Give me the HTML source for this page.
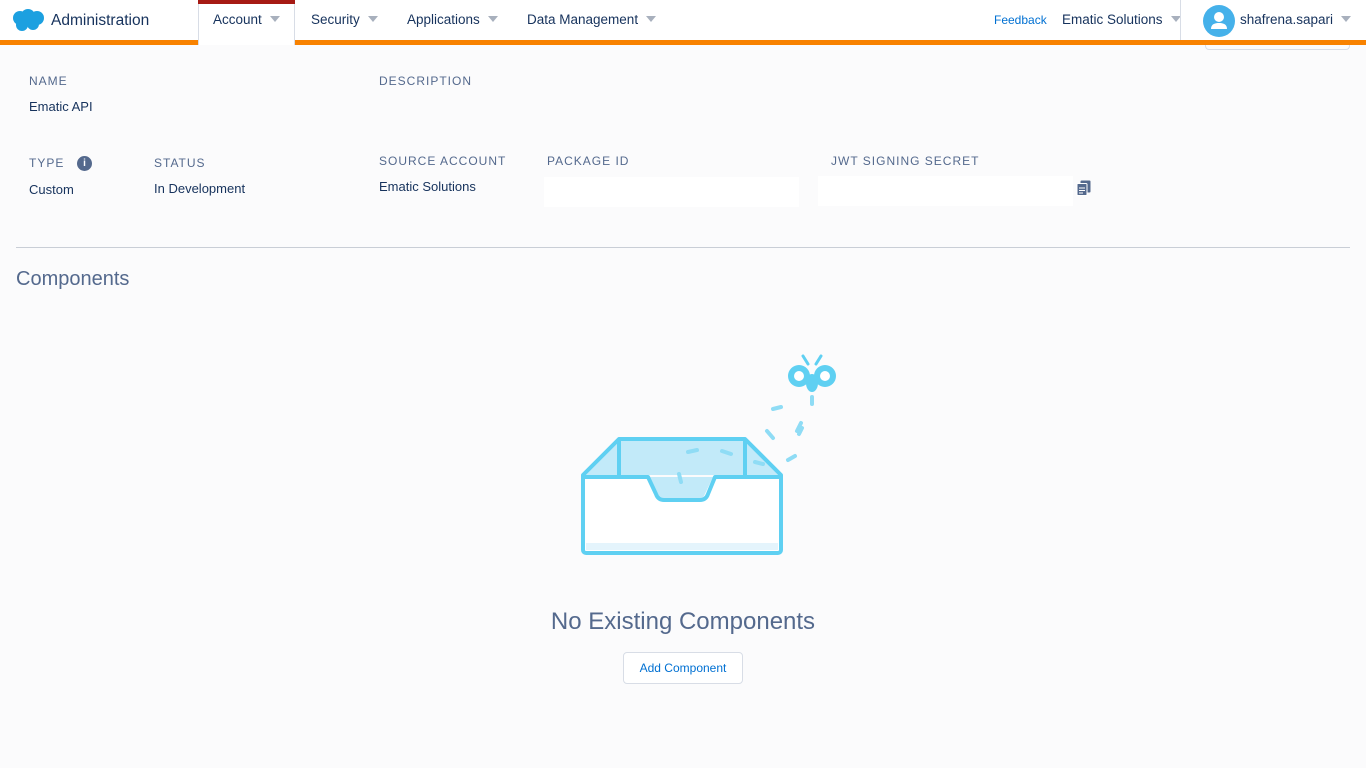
<!DOCTYPE html>
<html><head><meta charset="utf-8"><style>
*{margin:0;padding:0;box-sizing:border-box}
body{width:1366px;height:768px;background:#fbfbfc;font-family:"Liberation Sans",sans-serif;position:relative;overflow:hidden;color:#16325c}
.a{position:absolute;white-space:nowrap}
.hdr{position:absolute;left:0;top:0;width:1366px;height:40px;background:#fff}
.bar{position:absolute;left:0;top:40px;width:1366px;height:5px;background:#f88200}
.nav{font-size:13.5px;color:#16325c;top:12px}
.car{display:inline-block;width:0;height:0;border-left:5px solid transparent;border-right:5px solid transparent;border-top:6px solid #a8b0bd;margin-left:8px;vertical-align:2px}
.lbl{font-size:12px;letter-spacing:1px;color:#54698d}
.val{font-size:13px;color:#16325c}
</style></head><body>
<div class="hdr"></div>
<div class="bar"></div>
<div class="a" style="left:198px;top:0;width:97px;height:45px;background:#fff;border-left:1px solid #d8dde6;border-right:1px solid #d8dde6"></div>
<div class="a" style="left:198px;top:0;width:97px;height:4px;background:#a61a14"></div>
<svg class="a" style="left:11px;top:8px" width="34" height="24" viewBox="0 0 34 24"><g fill="#1ca0e0"><circle cx="9" cy="10" r="7"/><circle cx="17" cy="8" r="7"/><circle cx="26" cy="10" r="7"/><circle cx="22" cy="16" r="6"/><circle cx="11" cy="17" r="6"/></g></svg>
<div class="a" style="left:51px;top:12px;font-size:15.5px;color:#16325c">Administration</div>
<div class="a nav" style="left:213px">Account<span class="car"></span></div>
<div class="a nav" style="left:311px">Security<span class="car"></span></div>
<div class="a nav" style="left:407px">Applications<span class="car"></span></div>
<div class="a nav" style="left:527px">Data Management<span class="car"></span></div>
<div class="a" style="left:994px;top:13px;font-size:12px;color:#0070d2">Feedback</div>
<div class="a nav" style="left:1062px">Ematic Solutions<span class="car"></span></div>
<div class="a" style="left:1180px;top:0;width:1px;height:40px;background:#d8dde6"></div>
<div class="a" style="left:1203px;top:5px;width:32px;height:32px;border-radius:50%;background:#45b1ea"></div>
<svg class="a" style="left:1203px;top:5px" width="32" height="32"><circle cx="16" cy="12" r="5" fill="#fff"/><path d="M8 24c0-5 4-6 8-6s8 1 8 6z" fill="#fff"/></svg>
<div class="a nav" style="left:1240px">shafrena.sapari<span class="car"></span></div>
<div class="a" style="left:1205px;top:45px;width:145px;height:5px;border:1px solid #d8dde6;border-top:none;border-radius:0 0 4px 4px"></div>

<div class="a lbl" style="left:29px;top:74px">NAME</div>
<div class="a val" style="left:29px;top:99px">Ematic API</div>
<div class="a lbl" style="left:379px;top:74px">DESCRIPTION</div>
<div class="a lbl" style="left:29px;top:156px">TYPE</div>
<div class="a" style="left:77px;top:156px;width:15px;height:15px;border-radius:50%;background:#54698d;color:#fff;font-size:10px;font-weight:bold;text-align:center;line-height:15px">i</div>
<div class="a val" style="left:29px;top:182px">Custom</div>
<div class="a lbl" style="left:154px;top:156px">STATUS</div>
<div class="a val" style="left:154px;top:181px">In Development</div>
<div class="a lbl" style="left:379px;top:154px">SOURCE ACCOUNT</div>
<div class="a val" style="left:379px;top:179px">Ematic Solutions</div>
<div class="a lbl" style="left:547px;top:154px">PACKAGE ID</div>
<div class="a" style="left:544px;top:177px;width:255px;height:30px;background:#fff"></div>
<div class="a lbl" style="left:831px;top:154px">JWT SIGNING SECRET</div>
<div class="a" style="left:818px;top:176px;width:255px;height:30px;background:#fff"></div>
<svg class="a" style="left:1076px;top:180px" width="16" height="16"><rect x="4.5" y="0.5" width="10" height="12" rx="1" fill="#54698d"/><rect x="1" y="3.5" width="10" height="12" rx="1" fill="#54698d" stroke="#fff" stroke-width="1"/><path d="M3 8h6M3 10.5h6M3 13h4" stroke="#fff"/></svg>
<div class="a" style="left:16px;top:247px;width:1334px;height:1px;background:#c9ced6"></div>
<div class="a" style="left:16px;top:268px;font-size:20px;color:#54698d">Components</div>

<svg class="a" style="left:570px;top:340px" width="280" height="230" viewBox="570 340 280 230">
<path d="M619 439H745L781 475H583Z" fill="#c2eaf9"/>
<rect x="583" y="477" width="198" height="76" rx="4" fill="#fff"/>
<rect x="586" y="543" width="192" height="7" fill="#e4f4fc"/>
<path d="M650 477L660 498H703L713 477Z" fill="#c2eaf9"/>
<g fill="none" stroke="#5fd0f2" stroke-width="4" stroke-linejoin="round">
<path d="M619 439H745L781 475V550a3 3 0 0 1-3 3H586a3 3 0 0 1-3-3V475Z"/>
<path d="M583 477H648L656 494Q658 500 664 500H700Q706 500 708 494L715 477H781"/>
<path d="M619 439V477M745 439V477"/>
</g>
<g fill="none" stroke="#8fdcf5" stroke-width="4" stroke-linecap="round">
<path d="M681 482L679 474"/><path d="M688 452L697 450"/><path d="M722 451L731 454"/><path d="M755 462L763 464"/>
<path d="M788 460L795 456"/><path d="M799 434L802 428"/><path d="M801 423L797 431"/><path d="M767 431L773 438"/>
<path d="M773 409L781 407"/><path d="M812 404V397"/>
</g>
<g fill="#5fd0f2"><circle cx="799" cy="376" r="11"/><circle cx="825" cy="376" r="11"/><ellipse cx="812" cy="383" rx="6" ry="9"/></g>
<circle cx="799" cy="376" r="5" fill="#fff"/><circle cx="825" cy="376" r="5" fill="#fff"/>
<path d="M808 364L803 356M816 364L821 356" stroke="#5fd0f2" stroke-width="3" stroke-linecap="round"/>
</svg>

<div class="a" style="left:0;width:1366px;top:608px;text-align:center;font-size:24px;color:#54698d">No Existing Components</div>
<div class="a" style="left:623px;top:652px;width:120px;height:32px;border:1px solid #d8dde6;border-radius:4px;background:#fff;text-align:center;line-height:30px;font-size:12px;color:#0070d2">Add Component</div>
</body></html>
